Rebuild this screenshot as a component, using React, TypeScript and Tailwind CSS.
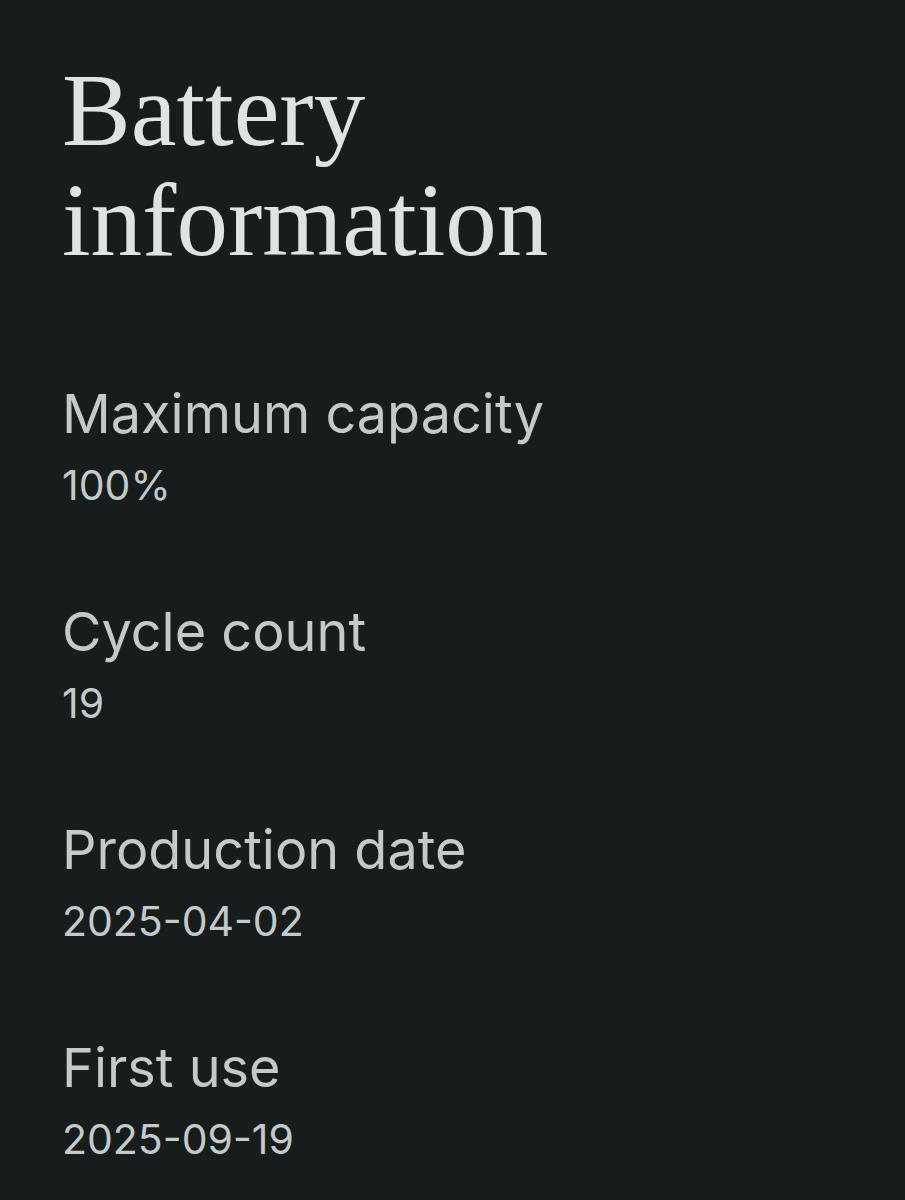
const rows = [
  { label: "Maximum capacity", value: "100%" },
  { label: "Cycle count", value: "19" },
  { label: "Production date", value: "2025-04-02" },
  { label: "First use", value: "2025-09-19" },
];

export default function App() {
  return (
    <main className="min-h-[1200px] w-full bg-[#171d1d] pl-[62px] pt-[55px] font-['Inter',sans-serif]">
      <h1 className="font-['Liberation_Serif',serif] text-[103px] leading-[110px] font-normal text-[#dee4e3]">
        Battery
        <br />
        information
      </h1>

      <div className="mt-[107px] flex flex-col gap-[83px]">
        {rows.map((row) => (
          <div key={row.label} className="flex flex-col">
            <span className="text-[54px] leading-[64px] text-[#c3cac9]">{row.label}</span>
            <span className="mt-[7px] text-[41px] leading-[64px] text-[#c3cac9]">{row.value}</span>
          </div>
        ))}
      </div>
    </main>
  );
}
